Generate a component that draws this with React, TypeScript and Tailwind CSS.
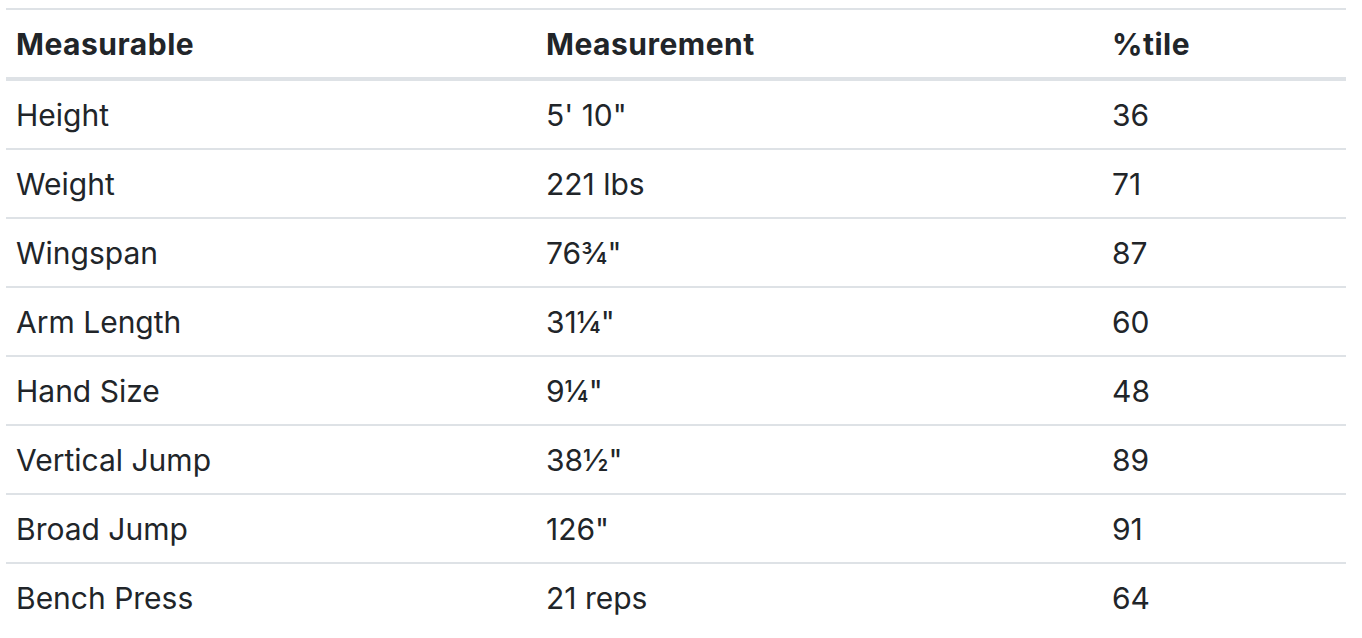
import React from "react";

const rows: [string, string, string][] = [
  ["Height", "5' 10\"", "36"],
  ["Weight", "221 lbs", "71"],
  ["Wingspan", "76¾\"", "87"],
  ["Arm Length", "31¼\"", "60"],
  ["Hand Size", "9¼\"", "48"],
  ["Vertical Jump", "38½\"", "89"],
  ["Broad Jump", "126\"", "91"],
  ["Bench Press", "21 reps", "64"],
];

export default function App() {
  return (
    <div className="bg-white w-[1362px] h-[638px] overflow-hidden pt-[8px] pl-[6px] text-[#212529] font-['Inter','Noto_Sans',sans-serif]">
      <table className="w-[1340px] border-collapse text-left text-[30px] leading-[45px]">
        <thead>
          <tr className="border-t-2 border-b-4 border-[#dee2e6]">
            <th className="w-[530px] px-[10px] pt-[12px] pb-[10px] font-bold tracking-[0.5px]">Measurable</th>
            <th className="w-[566px] px-[10px] pt-[12px] pb-[10px] font-bold tracking-[0.5px]">Measurement</th>
            <th className="px-[10px] pt-[12px] pb-[10px] font-bold tracking-[0.5px]">%tile</th>
          </tr>
        </thead>
        <tbody>
          {rows.map((r, i) => (
            <tr
              key={r[0]}
              className={i < rows.length - 1 ? "border-b-2 border-[#dee2e6]" : ""}
            >
              <td className="px-[10px] pt-[12px] pb-[10px]">{r[0]}</td>
              <td className="px-[10px] pt-[12px] pb-[10px]">{r[1]}</td>
              <td className="px-[10px] pt-[12px] pb-[10px]">{r[2]}</td>
            </tr>
          ))}
        </tbody>
      </table>
    </div>
  );
}
